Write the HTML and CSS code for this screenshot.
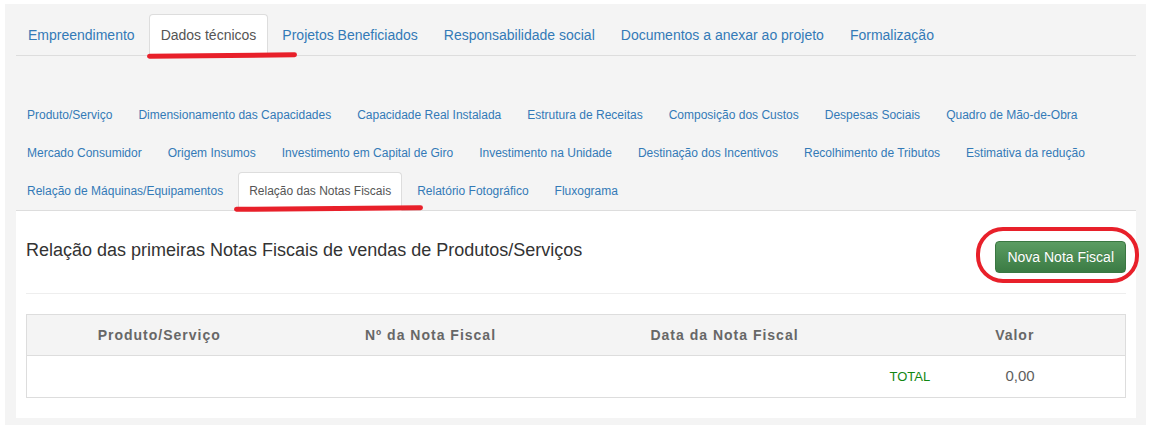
FILE: index.html
```html
<!DOCTYPE html>
<html lang="pt-BR">
<head>
<meta charset="utf-8">
<title>Relação das Notas Fiscais</title>
<link rel="stylesheet" href="styles.css">
</head>
<body>
<div class="page">
  <ul class="main-tabs">
    <li><a href="#">Empreendimento</a></li>
    <li class="active"><a href="#">Dados técnicos</a><span class="mark mark-main"></span></li>
    <li><a href="#">Projetos Beneficiados</a></li>
    <li><a href="#">Responsabilidade social</a></li>
    <li><a href="#">Documentos a anexar ao projeto</a></li>
    <li><a href="#">Formalização</a></li>
  </ul>

  <div class="tab-content">
    <ul class="sub-tabs">
      <li><a href="#">Produto/Serviço</a></li>
      <li><a href="#">Dimensionamento das Capacidades</a></li>
      <li><a href="#">Capacidade Real Instalada</a></li>
      <li><a href="#">Estrutura de Receitas</a></li>
      <li><a href="#">Composição dos Custos</a></li>
      <li><a href="#">Despesas Sociais</a></li>
      <li><a href="#">Quadro de Mão-de-Obra</a></li>
      <li><a href="#">Mercado Consumidor</a></li>
      <li><a href="#">Origem Insumos</a></li>
      <li><a href="#">Investimento em Capital de Giro</a></li>
      <li><a href="#">Investimento na Unidade</a></li>
      <li><a href="#">Destinação dos Incentivos</a></li>
      <li><a href="#">Recolhimento de Tributos</a></li>
      <li><a href="#">Estimativa da redução</a></li>
      <li><a href="#">Relação de Máquinas/Equipamentos</a></li>
      <li class="active"><a href="#">Relação das Notas Fiscais</a><span class="mark mark-sub"></span></li>
      <li><a href="#">Relatório Fotográfico</a></li>
      <li><a href="#">Fluxograma</a></li>
    </ul>

    <div class="pane">
      <div class="pane-head">
        <h3 class="pane-title">Relação das primeiras Notas Fiscais de vendas de Produtos/Serviços</h3>
        <div class="btn-wrap">
          <button class="btn-success" type="button">Nova Nota Fiscal</button>
          <span class="ring"></span>
        </div>
      </div>
      <hr class="divider">
      <table class="nf-table">
        <colgroup>
          <col class="c1"><col class="c2"><col class="c3"><col class="c4">
        </colgroup>
        <thead>
          <tr>
            <th>Produto/Serviço</th>
            <th>Nº da Nota Fiscal</th>
            <th>Data da Nota Fiscal</th>
            <th class="th-valor">Valor</th>
          </tr>
        </thead>
        <tbody>
          <tr>
            <td colspan="3"></td>
            <td class="td-total"><span class="total-label">TOTAL</span><span class="total-value">0,00</span></td>
          </tr>
        </tbody>
      </table>
    </div>
  </div>
</div>
</body>
</html>
```

FILE: styles.css
```css
html, body {
  margin: 0;
  padding: 0;
  background: #fff;
  font-family: "Liberation Sans", Arial, sans-serif;
  color: #333;
}

.page {
  margin: 4px 3px 0 5px;
  background: #f4f4f4;
  padding: 10px 10px 8px 11px;
}

/* main tabs */
.main-tabs {
  list-style: none;
  margin: 0;
  padding: 0;
  display: flex;
  border-bottom: 1px solid #ddd;
}
.main-tabs li {
  position: relative;
  margin-bottom: -1px;
  margin-right: 2px;
}
.main-tabs a {
  display: block;
  padding: 10px 11px;
  font-size: 14px;
  line-height: 20px;
  color: #337ab7;
  text-decoration: none;
  border: 1px solid transparent;
  border-radius: 4px 4px 0 0;
}
.main-tabs .active a {
  color: #555;
  background: #fff;
  border-color: #ddd #ddd transparent;
}

/* sub tabs */
.tab-content {
  padding-top: 40px;
}
.sub-tabs {
  list-style: none;
  margin: 0;
  padding: 0;
  display: flex;
  flex-wrap: wrap;
  border-bottom: 1px solid #ddd;
}
.sub-tabs li {
  position: relative;
  margin-bottom: -1px;
  margin-right: 4px;
}
.sub-tabs a {
  display: block;
  padding: 10px 10px;
  font-size: 12px;
  line-height: 17px;
  color: #337ab7;
  text-decoration: none;
  border: 1px solid transparent;
  border-radius: 4px 4px 0 0;
}
.sub-tabs .active a {
  color: #555;
  background: #fff;
  border-color: #ddd #ddd transparent;
}

/* red annotation marks */
.mark {
  position: absolute;
  height: 5px;
  background: #e8202a;
  border-radius: 3px;
}
.mark-main {
  left: -2px;
  top: 39px;
  width: 150px;
  transform: rotate(-0.6deg);
}
.mark-sub {
  left: -4px;
  top: 34px;
  width: 189px;
  transform: rotate(-0.5deg);
}

/* content pane */
.pane {
  background: #fff;
  padding: 30px 10px 20px;
}
.pane-head {
  display: flex;
  justify-content: space-between;
  align-items: flex-start;
}
.pane-title {
  margin: 0;
  font-size: 18px;
  line-height: 1.1;
  font-weight: 400;
  color: #333;
}
.btn-wrap {
  position: relative;
}
.btn-success {
  display: block;
  font-family: "Liberation Sans", Arial, sans-serif;
  font-size: 14px;
  line-height: 20px;
  padding: 5px 11px;
  color: #fff;
  background: linear-gradient(to bottom, #5b9c62 0%, #3b7b44 100%);
  border: 1px solid #3a7741;
  border-radius: 4px;
  text-shadow: 0 -1px 0 rgba(0, 0, 0, 0.15);
  cursor: pointer;
}
.ring {
  position: absolute;
  left: -19px;
  top: -14px;
  width: 163px;
  height: 56px;
  box-sizing: border-box;
  border: 4px solid #e8202a;
  border-radius: 27px;
  pointer-events: none;
}

.divider {
  margin: 20px 0;
  border: 0;
  border-top: 1px solid #eee;
  height: 0;
}

/* table */
.nf-table {
  width: 100%;
  border-collapse: collapse;
  table-layout: fixed;
  border: 1px solid #ddd;
}
.nf-table .c1 { width: 265px; }
.nf-table .c2 { width: 278px; }
.nf-table .c3 { width: 310px; }
.nf-table th {
  padding: 10px 8px;
  font-size: 14px;
  line-height: 20px;
  font-weight: 700;
  letter-spacing: 1px;
  color: #676767;
  text-align: center;
  background: #f4f4f4;
  border-bottom: 1px solid #ddd;
}
.nf-table th.th-valor {
  padding-left: 33px;
}
.nf-table td {
  padding: 10px 8px;
  line-height: 20px;
  font-size: 14px;
}
.nf-table td.td-total {
  padding-left: 10px;
  white-space: nowrap;
}
.total-label {
  display: inline-block;
  width: 116px;
  font-size: 13px;
  color: #128712;
}
.total-value {
  font-size: 15px;
  color: #5e5e5e;
}
```
